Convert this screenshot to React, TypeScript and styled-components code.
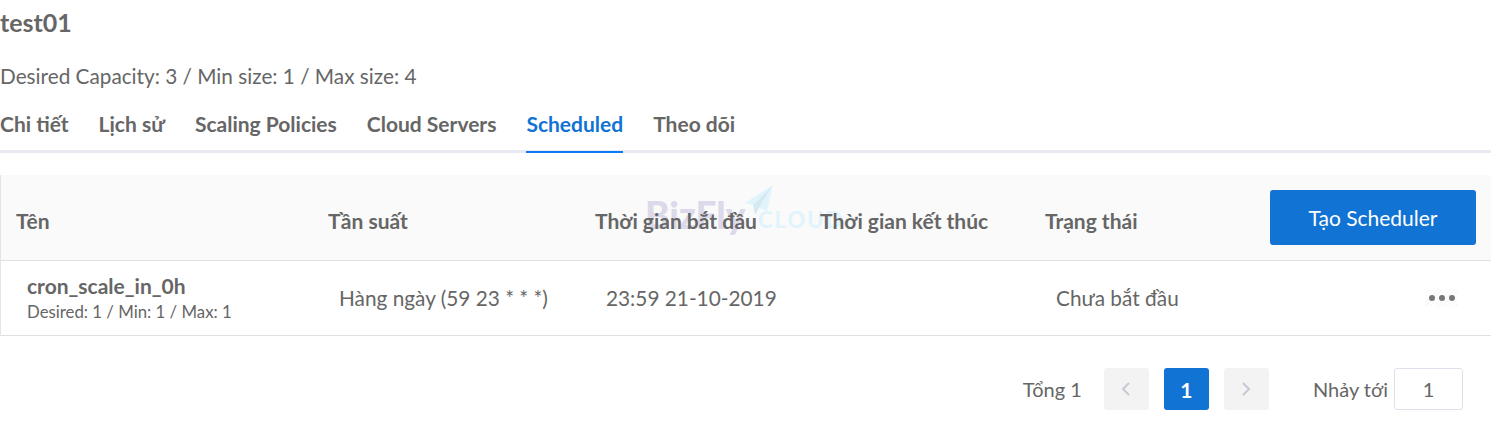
import React from "react";
import styled, { createGlobalStyle } from "styled-components";

const GlobalStyle = createGlobalStyle`
  html, body {
    margin: 0;
    padding: 0;
    background: #fff;
    font-family: Lato, "Noto Sans", sans-serif;
    color: #666;
  }
`;

const tabs = ["Chi tiết", "Lịch sử", "Scaling Policies", "Cloud Servers", "Scheduled", "Theo dõi"];

const App = () => {
  return (
    <Page>
      <GlobalStyle />
      <Title>test01</Title>
      <Capacity>Desired Capacity: 3 / Min size: 1 / Max size: 4</Capacity>
      <TabBar>
        {tabs.map((tab) => (
          <Tab key={tab} $active={tab === "Scheduled"}>
            {tab}
          </Tab>
        ))}
      </TabBar>
      <Table>
        <HeaderRow>
          <HeaderCell>Tên</HeaderCell>
          <HeaderCell>Tần suất</HeaderCell>
          <HeaderCell>Thời gian bắt đầu</HeaderCell>
          <HeaderCell>Thời gian kết thúc</HeaderCell>
          <HeaderCell>Trạng thái</HeaderCell>
          <CreateButton>Tạo Scheduler</CreateButton>
          <Watermark>
            <WatermarkBiz>BizFly</WatermarkBiz>
            <WatermarkCloud>CLOUD</WatermarkCloud>
            <PlaneIcon viewBox="0 0 28 30" aria-hidden="true">
              <path d="M28 0 L0 18 L8 20 Z" fill="#e0f4fb" />
              <path d="M28 0 L8 20 L10 30 L14 23 Z" fill="#d5e9f3" />
              <path d="M28 0 L14 23 L22 26 Z" fill="#e0f4fb" />
            </PlaneIcon>
          </Watermark>
        </HeaderRow>
        <BodyRow>
          <NameCell>
            <CronName>cron_scale_in_0h</CronName>
            <CronMeta>Desired: 1 / Min: 1 / Max: 1</CronMeta>
          </NameCell>
          <BodyCell>Hàng ngày (59 23 * * *)</BodyCell>
          <BodyCell>23:59 21-10-2019</BodyCell>
          <BodyCell />
          <BodyCell>Chưa bắt đầu</BodyCell>
          <MoreCell>
            <MoreButton>
              <Dot />
              <Dot />
              <Dot />
            </MoreButton>
          </MoreCell>
        </BodyRow>
      </Table>
      <Pagination>
        <Total>Tổng 1</Total>
        <PageButton>
          <Chevron viewBox="0 0 10 16" aria-hidden="true">
            <path d="M8 2 L2 8 L8 14" />
          </Chevron>
        </PageButton>
        <PageButton $active>1</PageButton>
        <PageButton>
          <Chevron viewBox="0 0 10 16" aria-hidden="true">
            <path d="M2 2 L8 8 L2 14" />
          </Chevron>
        </PageButton>
        <JumpLabel>Nhảy tới</JumpLabel>
        <JumpInput>1</JumpInput>
      </Pagination>
    </Page>
  );
};

export default App;

const columns = "312px 267px 225px 225px 225px 1fr";

const Page = styled.div`
  width: 1491px;
  height: 423px;
  overflow: hidden;
  box-sizing: border-box;
  padding-top: 7px;
`;

const Title = styled.h1`
  margin: 0;
  font-size: 25px;
  line-height: 30px;
  font-weight: 700;
  color: #666;
`;

const Capacity = styled.p`
  margin: 24px 0 0;
  font-size: 20.75px;
  line-height: 30px;
  color: #666;
`;

const TabBar = styled.div`
  display: flex;
  align-items: flex-start;
  gap: 30px;
  height: 47px;
  margin-top: 12px;
  border-bottom: 3px solid #e8e9f1;
`;

const Tab = styled.div<{ $active?: boolean }>`
  height: 50px;
  box-sizing: border-box;
  padding-top: 7px;
  font-size: 21px;
  line-height: 28px;
  font-weight: 700;
  color: ${(p) => (p.$active ? "#1173d4" : "#666")};
  border-bottom: 2px solid ${(p) => (p.$active ? "#0a7af5" : "transparent")};
`;

const Table = styled.div`
  margin-top: 22px;
  border-left: 1px solid #e5e5e5;
`;

const HeaderRow = styled.div`
  position: relative;
  display: grid;
  grid-template-columns: ${columns};
  height: 86px;
  padding-left: 15px;
  background: #fafafa;
  border-bottom: 1px solid #e0e0e0;
  box-sizing: border-box;
`;

const HeaderCell = styled.div`
  position: relative;
  z-index: 1;
  padding-top: 32px;
  font-size: 21px;
  line-height: 28px;
  font-weight: 700;
  color: #666;
`;

const CreateButton = styled.button`
  position: relative;
  z-index: 1;
  width: 206px;
  height: 55px;
  margin-top: 15px;
  border: 0;
  border-radius: 3px;
  background: #1173d4;
  color: #fff;
  font-family: inherit;
  font-size: 21px;
`;

const Watermark = styled.div`
  position: absolute;
  left: 644px;
  top: 10px;
  width: 210px;
  height: 55px;
`;

const WatermarkBiz = styled.span`
  position: absolute;
  left: 0;
  top: 9px;
  font-size: 37px;
  line-height: 42px;
  font-weight: 900;
  color: #dcd9ea;
`;

const WatermarkCloud = styled.span`
  position: absolute;
  left: 113px;
  top: 23px;
  font-size: 22px;
  line-height: 24px;
  font-weight: 700;
  letter-spacing: 2px;
  color: #dff4fc;
`;

const PlaneIcon = styled.svg`
  position: absolute;
  left: 100px;
  top: 0;
  width: 28px;
  height: 30px;
`;

const BodyRow = styled.div`
  display: grid;
  grid-template-columns: ${columns};
  height: 75px;
  padding-left: 15px;
  border-bottom: 1px solid #e0e0e0;
  box-sizing: border-box;
`;

const BodyCell = styled.div`
  padding: 0 0 0 11px;
  align-self: center;
  font-size: 20.8px;
  line-height: 28px;
  color: #666;
`;

const NameCell = styled(BodyCell)`
  padding-bottom: 2px;
`;

const CronName = styled.div`
  font-size: 21px;
  line-height: 26px;
  font-weight: 700;
`;

const CronMeta = styled.div`
  margin-top: 3px;
  font-size: 16.8px;
  line-height: 20px;
`;

const MoreCell = styled.div`
  display: flex;
  justify-content: flex-end;
  align-items: center;
  padding-right: 33px;
`;

const MoreButton = styled.div`
  display: flex;
  align-items: center;
  gap: 4px;
  padding: 6px 3.5px;
  background: repeating-linear-gradient(135deg, #f7f7f7 0 1px, #fff 1px 3px);
`;

const Dot = styled.span`
  width: 6px;
  height: 6px;
  border-radius: 50%;
  background: #777;
`;

const Pagination = styled.div`
  display: flex;
  align-items: center;
  margin-top: 32px;
  padding-right: 28px;
  justify-content: flex-end;
`;

const Total = styled.span`
  margin-right: 22px;
  font-size: 20px;
  color: #666;
`;

const PageButton = styled.div<{ $active?: boolean }>`
  display: flex;
  align-items: center;
  justify-content: center;
  width: 45px;
  height: 42px;
  margin-right: 15px;
  border-radius: 3px;
  background: ${(p) => (p.$active ? "#1173d4" : "#f3f3f3")};
  color: #fff;
  font-size: 21px;
  font-weight: 700;
`;

const Chevron = styled.svg`
  width: 10px;
  height: 16px;
  fill: none;
  stroke: #c5c9d6;
  stroke-width: 2;
`;

const JumpLabel = styled.span`
  margin-left: 29px;
  margin-right: 6px;
  font-size: 20px;
  color: #666;
`;

const JumpInput = styled.div`
  display: flex;
  align-items: center;
  justify-content: center;
  box-sizing: border-box;
  width: 69px;
  height: 42px;
  border: 1px solid #dfe0ea;
  border-radius: 3px;
  font-size: 20px;
  color: #666;
`;
